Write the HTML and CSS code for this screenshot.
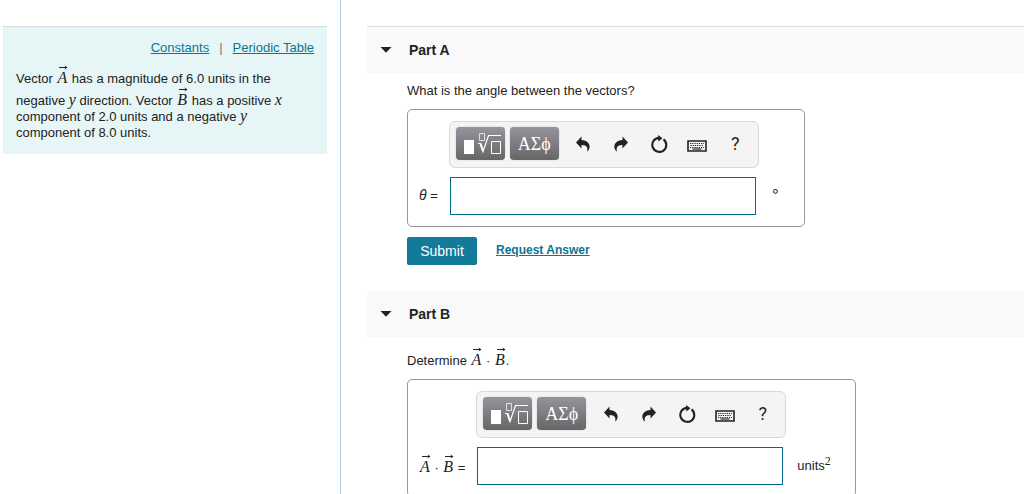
FILE: index.html
```
<!DOCTYPE html>
<html lang="en">
<head>
<meta charset="utf-8">
<title>Vector Dot Product</title>
<link rel="stylesheet" href="styles.css">
</head>
<body>
<svg class="sprite" aria-hidden="true">
  <symbol id="vector" viewBox="0 0 9 5"><path d="M0 2.5H7" stroke="currentColor" stroke-width="1"/><path d="M5.5 .5L8.5 2.5L5.5 4.5L6.3 2.5Z" fill="currentColor"/></symbol>
  <symbol id="caret" viewBox="0 0 12 6"><path d="M.5 0H11.5L6 5.8Z" fill="currentColor"/></symbol>
  <symbol id="template" viewBox="0 0 49 33">
    <path d="M8 13h10v14H8z" fill="#fff"/>
    <g fill="none" stroke="#fff"><path d="M35.5 14.5h9v12h-9z"/><path d="M23.5 6.5h5v7h-5z" opacity=".75"/><path d="M22 16.5H24.500L27 24.500L32.500 8.500H45" stroke-width="1.200"/><path d="M24.500 16.500L27 24" stroke-width="2"/></g>
  </symbol>
  <symbol id="undo" viewBox="0 0 16 16"><path d="M1 6.500L6.500 .5V4C12 4 15.500 8 14.500 12C14.200 13.500 13 15 12 15.500C13 12.500 12.500 9 6.500 9V12.500Z" fill="currentColor"/></symbol>
  <symbol id="redo" viewBox="0 0 16 16"><path d="M15 6.500L9.500 .5V4C4 4 .5 8 1.500 12C1.800 13.500 3 15 4 15.500C3 12.500 3.500 9 9.500 9V12.500Z" fill="currentColor"/></symbol>
  <symbol id="reset" viewBox="0 0 18 18"><path d="M13.500 4.300A7 7 0 1 1 9 2.900" fill="none" stroke="currentColor" stroke-width="2.100"/><path d="M8 0L12.500 3.200L8.300 6.500Z" fill="currentColor"/></symbol>
  <symbol id="keyboard" viewBox="0 0 20 12"><path d="M1 1h18v10H1z" fill="#f4f4f4" stroke="currentColor" stroke-width="1.600"/><path d="M3 3.500h14M3.500 5.500h13M3 7.500h14" stroke="currentColor" stroke-width="1.200" stroke-dasharray="1.200 1"/><path d="M5.500 9h9" stroke="currentColor" stroke-width="1.200"/></symbol>
</svg>
<div class="page">
  <aside class="sidebar">
    <section class="intro">
      <nav class="resources"><a href="#">Constants</a><span class="divider">|</span><a href="#">Periodic Table</a></nav>
      <p class="text">Vector <span class="vec">A<svg><use href="#vector"/></svg></span> has a magnitude of 6.0 units in the negative <i class="var">y</i> direction. Vector <span class="vec">B<svg><use href="#vector"/></svg></span> has a positive <i class="var">x</i> component of 2.0 units and a negative <i class="var">y</i> component of 8.0 units.</p>
    </section>
  </aside>
  <main class="parts">
    <section class="part">
      <h2 class="part-title part-title-first"><button type="button" class="toggle" aria-expanded="true"><svg class="caret"><use href="#caret"/></svg>Part A</button></h2>
      <div class="part-body">
        <p class="text question">What is the angle between the vectors?</p>
        <div class="answer">
          <div class="toolbar">
            <button type="button" class="palette" aria-label="Templates"><svg class="template"><use href="#template"/></svg></button>
            <button type="button" class="palette">ΑΣϕ</button>
            <button type="button" class="tool" aria-label="Undo"><svg class="arrow"><use href="#undo"/></svg></button>
            <button type="button" class="tool" aria-label="Redo"><svg class="arrow"><use href="#redo"/></svg></button>
            <button type="button" class="tool" aria-label="Reset"><svg class="reset"><use href="#reset"/></svg></button>
            <button type="button" class="tool" aria-label="Keyboard shortcuts"><svg class="keyboard"><use href="#keyboard"/></svg></button>
            <button type="button" class="tool">?</button>
          </div>
          <label class="text label" for="theta"><i class="theta">θ</i> =</label>
          <input class="field" id="theta" type="text">
          <span class="text unit degree">∘</span>
        </div>
        <div class="actions"><button type="button" class="submit">Submit</button><a class="request" href="#">Request Answer</a></div>
      </div>
    </section>
    <section class="part">
      <h2 class="part-title"><button type="button" class="toggle" aria-expanded="true"><svg class="caret"><use href="#caret"/></svg>Part B</button></h2>
      <div class="part-body">
        <p class="text question">Determine <span class="vec">A<svg><use href="#vector"/></svg></span> · <span class="vec">B<svg><use href="#vector"/></svg></span>.</p>
        <div class="answer">
          <div class="toolbar">
            <button type="button" class="palette" aria-label="Templates"><svg class="template"><use href="#template"/></svg></button>
            <button type="button" class="palette">ΑΣϕ</button>
            <button type="button" class="tool" aria-label="Undo"><svg class="arrow"><use href="#undo"/></svg></button>
            <button type="button" class="tool" aria-label="Redo"><svg class="arrow"><use href="#redo"/></svg></button>
            <button type="button" class="tool" aria-label="Reset"><svg class="reset"><use href="#reset"/></svg></button>
            <button type="button" class="tool" aria-label="Keyboard shortcuts"><svg class="keyboard"><use href="#keyboard"/></svg></button>
            <button type="button" class="tool">?</button>
          </div>
          <label class="text label" for="dot"><span class="vec">A<svg><use href="#vector"/></svg></span> · <span class="vec">B<svg><use href="#vector"/></svg></span> =</label>
          <input class="field" id="dot" type="text">
          <span class="text unit">units<sup>2</sup></span>
        </div>
      </div>
    </section>
  </main>
</div>
</body>
</html>
```
FILE: styles.css
```
* { box-sizing: border-box; }
body { margin: 0; background: #fff; color: #222; font-family: "Liberation Sans", Arial, sans-serif; font-size: 13px; line-height: 16px; }
button { margin: 0; padding: 0; border: 0; background: none; color: inherit; font: inherit; }
a { color: #0b7593; text-decoration: underline; }
.sprite { display: none; }
.page { display: flex; height: 100vh; overflow: hidden; }
.sidebar { flex: none; width: 341px; padding: 26px 13px 0 3px; border-right: 1px solid #b4c9dc; }
.intro { padding: 13px; border-top: 1px solid #d5dcdd; background: #e6f6f7; }
.resources { display: flex; justify-content: flex-end; gap: 10px; margin-bottom: 9px; }
.divider { color: #777; }
.text { margin: 0; font-size: 13px; line-height: 16px; }
.vec { position: relative; display: inline-block; padding: 5px 1px 0; font-family: "Liberation Serif", serif; font-size: 16px; line-height: 15px; font-style: italic; }
.vec svg { position: absolute; top: 0; right: 0; width: 9px; height: 5px; }
.var { font-family: "Liberation Serif", serif; font-size: 16px; line-height: 12px; }
.parts { flex: 1; min-width: 0; padding: 26px 0 0 26px; }
.part-title { margin: 0; background: #f9f9f9; font-size: 14px; }
.part-title-first { border-top: 1px solid #ddd; }
.toggle { display: flex; align-items: center; gap: 17px; width: 100%; height: 46px; padding-left: 13px; font-weight: bold; }
.caret { width: 12px; height: 6px; }
.part-body { padding: 10px 0 26px 40px; }
.question { margin-bottom: 10px; }
.answer { display: grid; grid-template-columns: auto 310px auto; width: fit-content; row-gap: 9px; padding: 11px 24px 11px 11px; border: 1px solid #999; border-radius: 5px; align-items: center; }
.toolbar { grid-column: 2; display: flex; align-items: center; gap: 5px; height: 47px; padding: 0 5px 2px 6px; border: 1px solid #d8d8d8; border-radius: 6px; background: #f4f4f4; }
.palette { width: 49px; height: 33px; border-radius: 4px; background: linear-gradient(#96949c, #666); box-shadow: 0 0 1px #777; color: #fff; font-family: "Liberation Serif", serif; font-size: 18px; }
.template { display: block; width: 49px; height: 33px; }
.tool { display: flex; align-items: center; justify-content: center; width: 33px; height: 33px; font-family: Roboto, sans-serif; font-size: 18px; }
.palette + .tool { margin-left: 3px; }
.arrow { width: 16px; height: 16px; }
.reset { width: 18px; height: 18px; }
.keyboard { width: 20px; height: 12px; margin-top: 4px; }
.label { grid-column: 1; padding: 0 11px 2px 0; white-space: nowrap; }
.theta { font-size: 14px; }
.field { width: 306px; height: 38px; margin-left: 1px; padding: 0 8px; border: 1px solid #006a8a; border-radius: 0; background: #fff; font: inherit; }
.unit { padding-left: 11px; }
.unit sup { font-family: "Liberation Serif", serif; font-size: 12px; line-height: 8px; }
.degree { padding: 0 0 10px 12px; font-family: "DejaVu Sans", sans-serif; font-size: 15px; }
.actions { display: flex; align-items: center; gap: 19px; margin-top: 10px; }
.submit { width: 70px; height: 28px; border-radius: 2px; background: #137a99; color: #fff; font-size: 14px; }
.request { padding-bottom: 2px; font-size: 12px; font-weight: bold; }
```
